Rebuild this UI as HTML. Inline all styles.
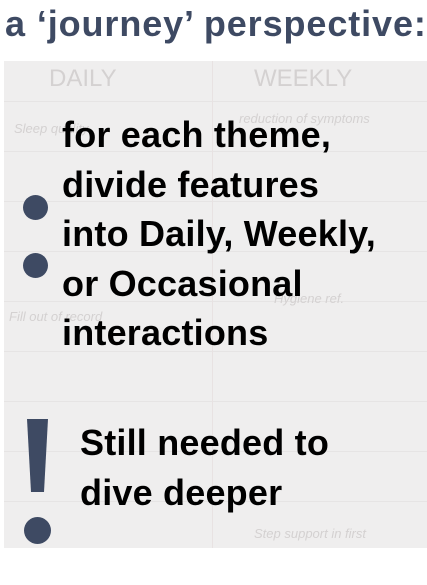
<!DOCTYPE html>
<html><head><style>
body{margin:0;width:427px;height:585px;background:#fff;position:relative;overflow:hidden;font-family:"Liberation Sans",sans-serif}
.t{position:absolute;left:5px;top:3px;font-size:36px;font-weight:bold;color:#3e4a63;letter-spacing:0.9px;white-space:nowrap}
.ph{position:absolute;left:4px;top:61px;width:423px;height:487px;background:#efeeee;overflow:hidden}
.ln{position:absolute;left:0;width:100%;height:1px;background:#e6e4e4}
.vl{position:absolute;top:0;width:1px;height:100%;background:#e8e2e2}
.hw{position:absolute;color:#d4d1d1;font-size:13px;font-style:italic;white-space:nowrap}
.b{position:absolute;left:62px;top:110px;font-size:36px;font-weight:bold;color:#000;line-height:49.5px;letter-spacing:0.2px;white-space:nowrap}
.s{position:absolute;left:80px;top:418px;font-size:36px;font-weight:bold;color:#000;line-height:50px;letter-spacing:0.2px;white-space:nowrap}
.d{position:absolute;border-radius:50%;background:#3e4a63}
</style></head><body>
<div class="t">a ‘journey’ perspective:</div>
<div class="ph">
<div class="ln" style="top:40px"></div><div class="ln" style="top:90px"></div><div class="ln" style="top:140px"></div><div class="ln" style="top:190px"></div><div class="ln" style="top:240px"></div><div class="ln" style="top:290px"></div><div class="ln" style="top:340px"></div><div class="ln" style="top:390px"></div><div class="ln" style="top:440px"></div>
<div class="vl" style="left:208px"></div>
<div class="hw" style="left:45px;top:4px;font-size:24px;font-style:normal">DAILY</div>
<div class="hw" style="left:250px;top:4px;font-size:24px;font-style:normal">WEEKLY</div>
<div class="hw" style="left:10px;top:60px">Sleep quality</div>
<div class="hw" style="left:235px;top:50px">reduction of symptoms</div>
<div class="hw" style="left:270px;top:230px">Hygiene ref.</div>
<div class="hw" style="left:5px;top:248px">Fill out of record</div>
<div class="hw" style="left:250px;top:465px">Step support in first</div>
</div>
<div class="b">for each theme,<br>divide features<br>into Daily, Weekly,<br>or Occasional<br>interactions</div>
<div class="d" style="left:23px;top:195px;width:25px;height:25px"></div>
<div class="d" style="left:23px;top:253px;width:25px;height:25px"></div>
<svg style="position:absolute;left:0;top:0" width="427" height="585"><polygon points="27,419 48,419 44,492 31,492" fill="#3e4a63"/></svg>
<div class="d" style="left:24px;top:517px;width:27px;height:27px"></div>
<div class="s">Still needed to<br>dive deeper</div>
</body></html>
